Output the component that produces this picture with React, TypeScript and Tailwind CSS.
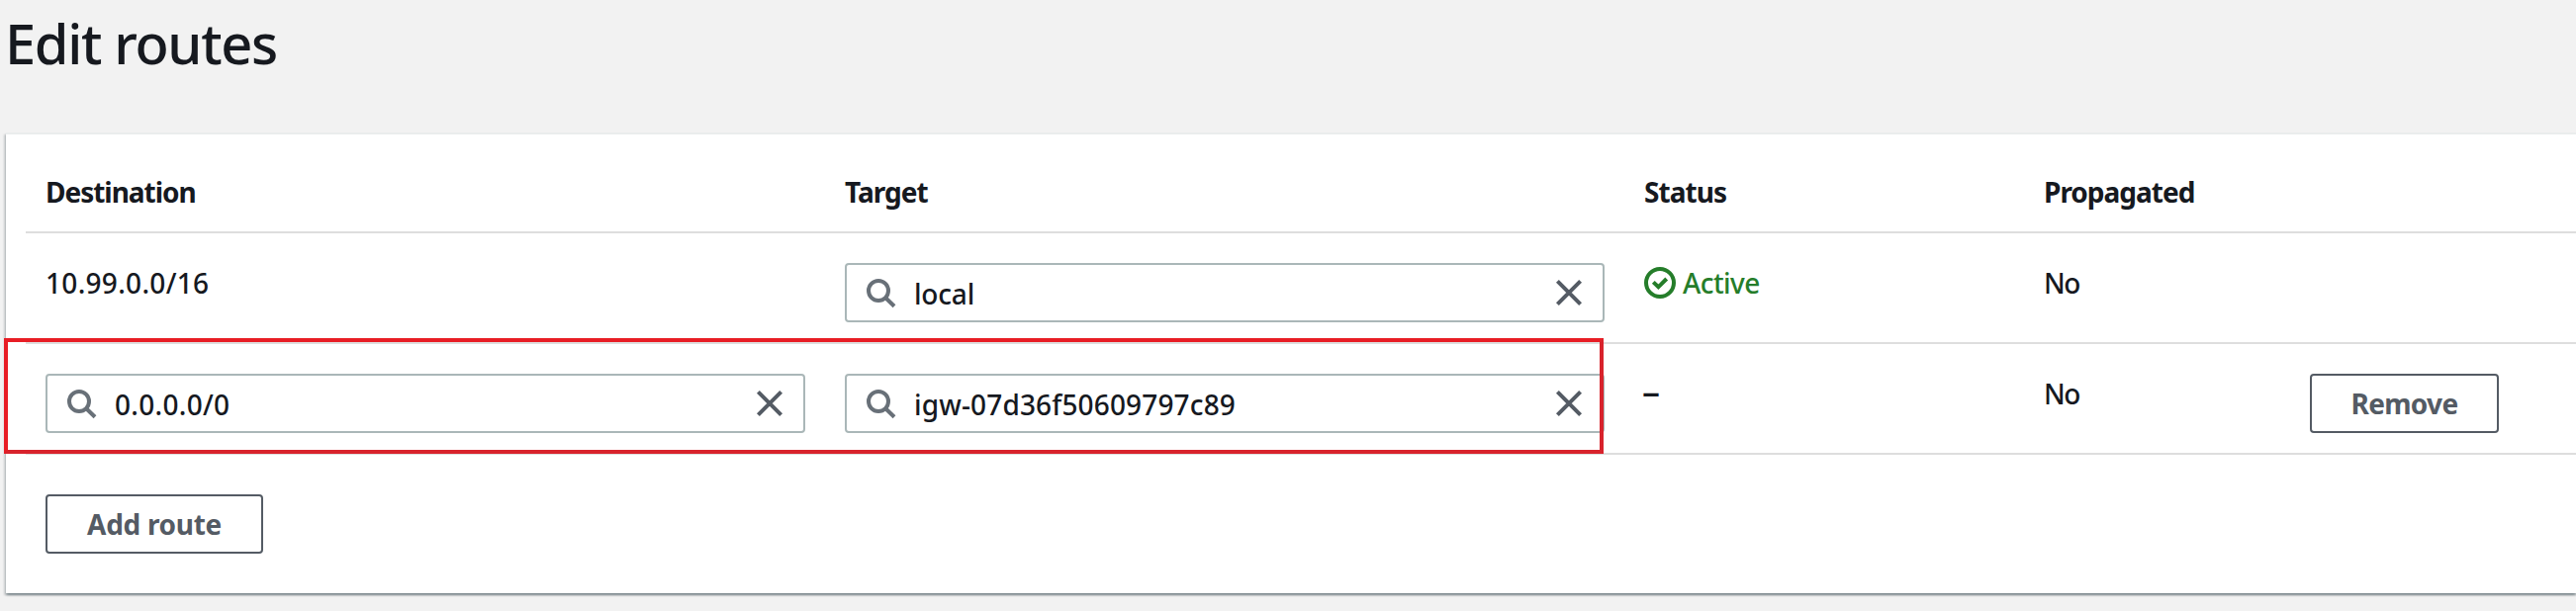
import type { ReactNode } from "react";

function SearchIcon() {
  return (
    <svg className="ml-5 h-8 w-8 shrink-0" viewBox="0 0 32 32" fill="none" stroke="#687078" strokeWidth="4">
      <circle cx="12" cy="14" r="10" />
      <path d="M19 21 L28 29.8" />
    </svg>
  );
}

function CloseIcon() {
  return (
    <svg className="mr-5 h-7 w-7 shrink-0" viewBox="0 0 28 28" fill="none" stroke="#545b64" strokeWidth="4">
      <path d="M2.4 2.4 L25.6 25.6 M25.6 2.4 L2.4 25.6" />
    </svg>
  );
}

function CheckIcon() {
  return (
    <svg className="h-8 w-8 shrink-0" viewBox="0 0 32 32" fill="none" stroke="#257d2a" strokeWidth="4">
      <circle cx="16" cy="16" r="14" />
      <path d="M9.3 15.4 L14.4 20.3 L22.7 12" />
    </svg>
  );
}

function SearchField({ children }: { children: ReactNode }) {
  return (
    <div className="flex h-[60px] w-[768px] items-center rounded-[4px] border-2 border-[#aab7b8] bg-white">
      <SearchIcon />
      <div className="ml-4 flex-1 pt-[2px]">{children}</div>
      <CloseIcon />
    </div>
  );
}

const grid = "grid grid-cols-[808px_808px_404px_269px_1fr] border-b-2 border-[#dedede] pl-5";
const button =
  "flex h-[60px] items-center justify-center rounded-[4px] border-2 border-[#545b64] bg-white font-bold text-[#545b64]";

export default function App() {
  return (
    <div className="h-[618px] w-full overflow-hidden bg-[#f2f2f2] pt-[5px] font-['Noto_Sans',sans-serif] text-[28px] leading-10 font-medium text-[#16191f]">
      <h1 className="ml-[5px] h-[129px] text-[56px] leading-[76px] tracking-[-1.35px]">Edit routes</h1>
      <div className="relative ml-[6px] h-[466px] border-t-2 border-[#eaeded] bg-white pl-5 shadow-[0_2px_2px_0_rgba(0,28,36,0.3),2px_2px_2px_0_rgba(0,28,36,0.15),-2px_2px_2px_0_rgba(0,28,36,0.15)]">
        <div className={`${grid} h-[100px] pt-[38px] font-bold`}>
          <div className="tracking-[-1.03px]">Destination</div>
          <div className="tracking-[-0.95px]">Target</div>
          <div className="tracking-[-0.95px]">Status</div>
          <div className="tracking-[-1px]">Propagated</div>
        </div>
        <div className={`${grid} h-[112px]`}>
          <div className="pt-[30px] tracking-[0.3px]">10.99.0.0/16</div>
          <div className="pt-[30px]">
            <SearchField>
              <span className="tracking-[-0.2px]">local</span>
            </SearchField>
          </div>
          <div className="flex items-start pt-[30px] text-[#257d2a]">
            <div className="flex h-10 items-center gap-[7px]">
              <CheckIcon />
              <span className="tracking-[-0.6px]">Active</span>
            </div>
          </div>
          <div className="pt-[30px] tracking-[-1.5px]">No</div>
        </div>
        <div className={`${grid} h-[112px]`}>
          <div className="pt-[30px]">
            <SearchField>
              <span className="tracking-[0.3px]">0.0.0.0/0</span>
            </SearchField>
          </div>
          <div className="pt-[30px]">
            <SearchField>
              <span className="tracking-[0.15px]">igw-07d36f50609797c89</span>
            </SearchField>
          </div>
          <div className="-ml-[2px] pt-[28px] text-[36px]">–</div>
          <div className="pt-[30px] tracking-[-1.5px]">No</div>
          <div className="pt-[30px]">
            <button className={`${button} w-[191px] tracking-[-0.7px]`}>Remove</button>
          </div>
        </div>
        <button className={`${button} mt-10 ml-5 w-[220px] tracking-[-0.3px]`}>Add route</button>
        <div className="absolute top-[206px] -left-[2px] h-[117px] w-[1617px] border-4 border-t-[#e81d25] border-r-[#d8232c] border-b-[#d8232c] border-l-[#e81d25]" />
      </div>
    </div>
  );
}
